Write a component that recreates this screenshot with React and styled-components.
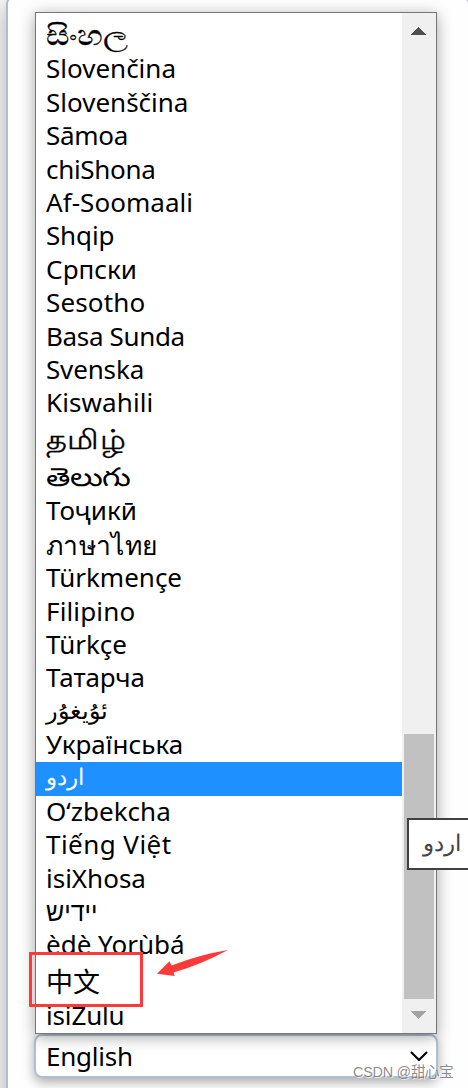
import React from "react";
import styled, { createGlobalStyle } from "styled-components";

const GlobalStyle = createGlobalStyle`
  *, *::before, *::after { box-sizing: border-box; }
  html, body { margin: 0; padding: 0; }
  body { background: #fff; overflow: hidden; }
`;

const Page = styled.div`
  position: relative;
  width: 468px;
  height: 1088px;
  overflow: hidden;
  background: #fefefe;
  padding-left: 6px;
  font-family: "Noto Sans", "Noto Sans CJK SC", "Liberation Sans", sans-serif;
`;

const Card = styled.div`
  width: 464px;
  height: 1112px;
  margin-top: -4px;
  padding: 16px 0 0 26px;
  background: #fefefe;
  border: 2px solid #b0bdcc;
  border-radius: 8px;
  box-shadow: 0 10px 24px 4px rgba(0, 0, 0, 0.28);
`;

const Picker = styled.div`
  display: flex;
  flex-direction: column;
  width: 404px;
  margin-top: -2px;
`;

const Popup = styled.div`
  position: relative;
  z-index: 1;
  display: flex;
  width: 402px;
  height: 1022px;
  margin-left: 1px;
  background: #fff;
  border: 1px solid #767676;
  box-shadow: 0 3px 14px rgba(0, 0, 0, 0.36);
`;

const List = styled.ul`
  flex: 1;
  height: 1020px;
  margin: 0;
  padding: 0;
  list-style: none;
  overflow: hidden;
`;

const Option = styled.li`
  display: flex;
  height: ${(p) => p.$height}px;
  padding-left: 10px;
  line-height: ${(p) => p.$line}px;
  font-size: ${(p) => p.$size}px;
  letter-spacing: ${(p) => p.$spacing}px;
  white-space: pre;
  color: ${(p) => (p.$active ? "#fff" : "#000")};
  background: ${(p) => (p.$active ? "#1e90ff" : "transparent")};
  -webkit-text-stroke: ${(p) => p.$stroke}px currentColor;
`;

const Label = styled.span`
  display: block;
  transform: scaleX(${(p) => p.$stretch});
  transform-origin: left center;
`;

const Scrollbar = styled.div`
  display: flex;
  flex-direction: column;
  align-items: center;
  width: 34px;
  background: #f0f0f0;
`;

const ScrollButton = styled.div`
  display: flex;
  justify-content: center;
  align-items: center;
  width: 34px;
  height: 34px;
  padding-right: 2px;
  padding-bottom: ${(p) => (p.$up ? 0 : 2)}px;
  padding-top: ${(p) => (p.$up ? 2 : 0)}px;
`;

const Track = styled.div`
  display: flex;
  flex: 1;
  flex-direction: column;
  justify-content: flex-end;
`;

const Thumb = styled.div`
  width: 30px;
  height: 265px;
  background: #c1c1c1;
`;

const Select = styled.div`
  display: flex;
  align-items: center;
  justify-content: space-between;
  width: 404px;
  height: 44px;
  padding: 0 8px 0 10px;
  background: #fff;
  border: 2px solid #b0bfd0;
  border-radius: 8px;
  box-shadow: 0 4px 12px rgba(0, 0, 0, 0.34);
  font-size: 26px;
  letter-spacing: -0.25px;
  line-height: 40px;
  color: #000;
`;

const Tooltip = styled.div`
  position: absolute;
  z-index: 2;
  left: 407px;
  top: 818px;
  width: 70px;
  height: 52px;
  padding-left: 14px;
  background: #fff;
  border: 2px solid #404040;
  color: #444;
  font-size: 23px;
  line-height: 44px;
  white-space: nowrap;
`;

const Marker = styled.div`
  position: absolute;
  z-index: 2;
  left: 29px;
  top: 952px;
  width: 114px;
  height: 55px;
  border: 3px solid #fd3a3a;
`;

const MarkerArrow = styled.svg`
  position: absolute;
  z-index: 2;
  left: 156px;
  top: 948px;
`;

const Watermark = styled.div`
  position: absolute;
  z-index: 3;
  left: 353px;
  top: 1060px;
  font: 14.4px/24px "Liberation Sans", "Noto Sans CJK SC", sans-serif;
  letter-spacing: -0.25px;
  white-space: nowrap;
  color: rgba(110, 110, 110, 0.8);
  text-shadow: 1px 1px 0 rgba(255, 255, 255, 0.7);
`;

const ROW = 33.4;

const languages = [
  { name: "සිංහල", height: 39.6, line: 42, size: 28, stretch: 1.165, stroke: 0.3 },
  { name: "Slovenčina", line: 31 },
  { name: "Slovenščina" },
  { name: "Sāmoa", spacing: -0.3 },
  { name: "chiShona", spacing: -0.3 },
  { name: "Af-Soomaali", spacing: 0.05 },
  { name: "Shqip", spacing: -0.15, line: 31 },
  { name: "Српски" },
  { name: "Sesotho", spacing: 0.15 },
  { name: "Basa Sunda", spacing: -0.35 },
  { name: "Svenska", spacing: -0.15 },
  { name: "Kiswahili", spacing: 0.1, line: 31 },
  { name: "தமிழ்", height: 38.5, line: 38, size: 27, stretch: 1.19, stroke: 0.3 },
  { name: "తెలుగు", height: 36.1, line: 36, size: 26, stretch: 1.2 },
  { name: "Тоҷикӣ" },
  { name: "ภาษาไทย", line: 34, stretch: 1.02 },
  { name: "Türkmençe" },
  { name: "Filipino", spacing: 0.15 },
  { name: "Türkçe" },
  { name: "Татарча", spacing: -0.1 },
  { name: "ئۇيغۇر", size: 24, line: 30 },
  { name: "Українська" },
  { name: "اردو", size: 23, height: 34.2, line: 28, active: true },
  { name: "Oʻzbekcha", height: 32.6, line: 31.4 },
  { name: "Tiếng Việt", spacing: 0.45 },
  { name: "isiXhosa" },
  { name: "יידיש", stretch: 0.96 },
  { name: "èdè Yorùbá", line: 30.5 },
  { name: "中文", height: 37.6, line: 40, size: 27 },
  { name: "isiZulu", spacing: -0.15, line: 30.5 },
];

function Arrow({ up }) {
  return (
    <svg width="16" height="8" viewBox="0 0 16 8" shapeRendering="crispEdges">
      <path d={up ? "M0 8 8 0l8 8z" : "M0 0h16L8 8z"} fill={up ? "#505050" : "#a3a3a3"} />
    </svg>
  );
}

export default function App() {
  return (
    <Page>
      <GlobalStyle />
      <Card>
        <Picker>
          <Popup>
            <List>
              {languages.map((l) => (
                <Option
                  key={l.name}
                  $height={l.height ?? ROW}
                  $line={l.line ?? ROW - 1}
                  $size={l.size ?? 26}
                  $spacing={l.spacing ?? 0}
                  $stroke={l.stroke ?? 0}
                  $active={l.active}
                >
                  <Label $stretch={l.stretch ?? 1}>{l.name}</Label>
                </Option>
              ))}
            </List>
            <Scrollbar>
              <ScrollButton $up>
                <Arrow up />
              </ScrollButton>
              <Track>
                <Thumb />
              </Track>
              <ScrollButton>
                <Arrow />
              </ScrollButton>
            </Scrollbar>
          </Popup>
          <Select>
            <span>English</span>
            <svg width="18" height="10" viewBox="0 0 18 10" fill="none">
              <path d="M1 1 9 9 17 1" stroke="#000" strokeWidth="2.1" />
            </svg>
          </Select>
        </Picker>
      </Card>
      <Tooltip>اردو</Tooltip>
      <Marker />
      <MarkerArrow width="74" height="32" viewBox="0 0 74 32">
        <path d="M1 25.8 13.5 13.3 15.5 17.5Q44 6.500 72 2Q44 17 17.5 24.5L18.7 28z" fill="#fd3a3a" />
      </MarkerArrow>
      <Watermark>CSDN @甜心宝</Watermark>
    </Page>
  );
}
